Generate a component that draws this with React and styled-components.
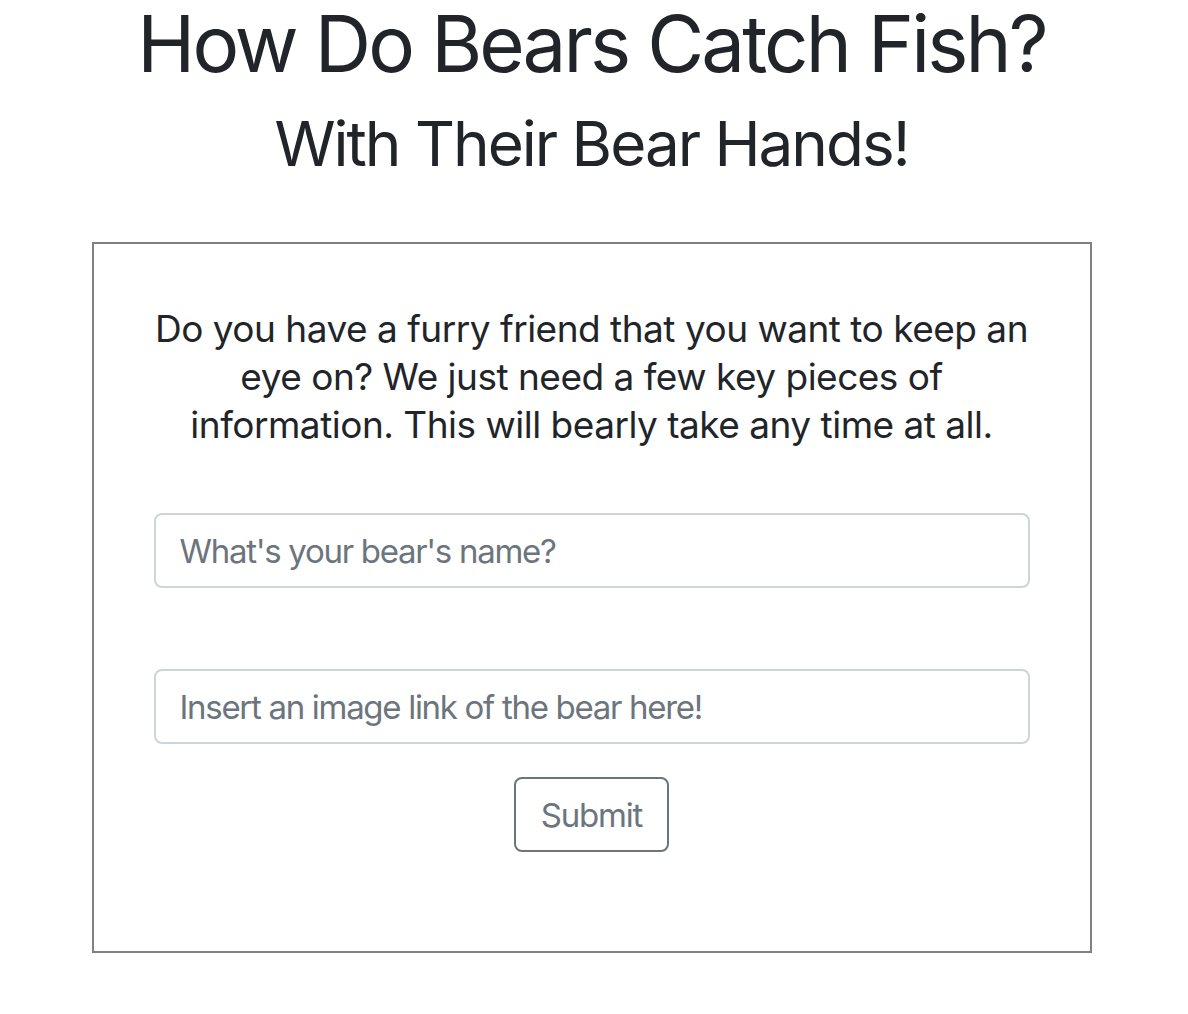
import React from "react";
import styled, { createGlobalStyle } from "styled-components";

const Global = createGlobalStyle`
  html, body { margin: 0; padding: 0; background: #fff; }
  body {
    font-family: Inter, "Noto Sans", "Liberation Sans", sans-serif;
    color: #212529;
  }
  * { box-sizing: border-box; }
`;

const Page = styled.div`
  width: 1183px;
  padding-top: 1px;
  display: flex;
  flex-direction: column;
  align-items: center;
`;

const Title = styled.h1`
  margin: -4px 0 16px;
  font-size: 78px;
  font-weight: 400;
  line-height: 94px;
  letter-spacing: -2.9px;
  text-align: center;
`;

const Subtitle = styled.h2`
  margin: 0 0 61px;
  font-size: 62px;
  font-weight: 400;
  line-height: 74px;
  letter-spacing: -2px;
  text-align: center;
`;

const Card = styled.div`
  width: 1000px;
  border: 2px solid #808080;
  padding: 61px 60px 99px;
  display: flex;
  flex-direction: column;
  align-items: center;
`;

const Intro = styled.p`
  margin: 0 0 64px;
  font-size: 37px;
  line-height: 48px;
  letter-spacing: -0.5px;
  text-align: center;
  width: 100%;
`;

const Form = styled.form`
  width: 100%;
  display: flex;
  flex-direction: column;
  align-items: center;
`;

const Input = styled.input`
  width: 100%;
  height: 75px;
  padding: 0 24px;
  font-family: inherit;
  font-size: 33px;
  letter-spacing: -1.3px;
  color: #495057;
  border: 2px solid #ced4da;
  border-radius: 8px;
  background: #fff;
  margin: 0 0 ${(p) => p.$gap}px;
  outline: none;
  &::placeholder { color: #6c757d; opacity: 1; }
`;

const Button = styled.button`
  width: 155px;
  height: 75px;
  padding: 0;
  font-family: inherit;
  font-size: 33px;
  letter-spacing: -1.2px;
  color: #6c757d;
  background: transparent;
  border: 2px solid #6c757d;
  border-radius: 8px;
`;

export default function App() {
  return (
    <>
      <Global />
      <Page>
        <Title>How Do Bears Catch Fish?</Title>
        <Subtitle>With Their Bear Hands!</Subtitle>
        <Card>
          <Intro>
            Do you have a furry friend that you want to keep an eye on? We just
            need a few key pieces of information. This will bearly take any time
            at all.
          </Intro>
          <Form onSubmit={(e) => e.preventDefault()}>
            <Input $gap={81} placeholder="What's your bear's name?" />
            <Input $gap={33} placeholder="Insert an image link of the bear here!" />
            <Button type="submit">Submit</Button>
          </Form>
        </Card>
      </Page>
    </>
  );
}
